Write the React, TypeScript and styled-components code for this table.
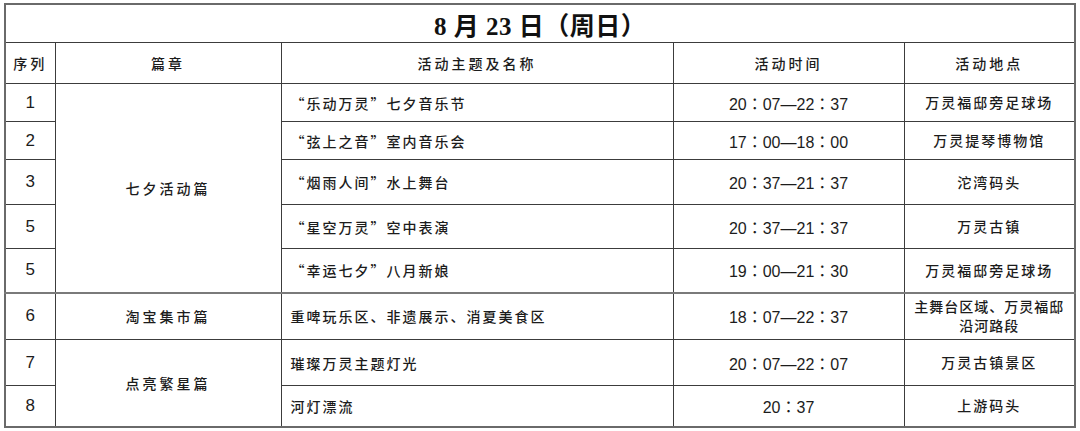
import styled, { createGlobalStyle } from 'styled-components';

const GlobalStyle = createGlobalStyle`
  html, body {
    margin: 0;
    padding: 0;
    background: #fff;
  }
  body {
    font-family: "Liberation Sans", "Noto Sans CJK SC", sans-serif;
    color: #1c1c1c;
  }
`;

type Row = {
  no: string;
  chapter?: { name: string; span: number };
  title: string;
  time: string;
  place: string;
  height: number;
  thick?: boolean;
};

const rows: Row[] = [
  { no: '1', chapter: { name: '七夕活动篇', span: 5 }, title: '“乐动万灵”七夕音乐节', time: '20：07—22：37', place: '万灵福邸旁足球场', height: 38 },
  { no: '2', title: '“弦上之音”室内音乐会', time: '17：00—18：00', place: '万灵提琴博物馆', height: 38 },
  { no: '3', title: '“烟雨人间”水上舞台', time: '20：37—21：37', place: '沱湾码头', height: 45 },
  { no: '5', title: '“星空万灵”空中表演', time: '20：37—21：37', place: '万灵古镇', height: 44 },
  { no: '5', title: '“幸运七夕”八月新娘', time: '19：00—21：30', place: '万灵福邸旁足球场', height: 44 },
  { no: '6', chapter: { name: '淘宝集市篇', span: 1 }, title: '重啤玩乐区、非遗展示、消夏美食区', time: '18：07—22：37', place: '主舞台区域、万灵福邸\n沿河路段', height: 47, thick: true },
  { no: '7', chapter: { name: '点亮繁星篇', span: 2 }, title: '璀璨万灵主题灯光', time: '20：07—22：07', place: '万灵古镇景区', height: 46 },
  { no: '8', title: '河灯漂流', time: '20：37', place: '上游码头', height: 41 },
];

function App() {
  return (
    <>
      <GlobalStyle />
      <Page>
        <Schedule>
          <colgroup>
            <col style={{ width: 50 }} />
            <col style={{ width: 226 }} />
            <col style={{ width: 392 }} />
            <col style={{ width: 231 }} />
            <col style={{ width: 171 }} />
          </colgroup>
          <thead>
            <tr>
              <TitleCell colSpan={5}>8 月 23 日（周日）</TitleCell>
            </tr>
            <HeadRow>
              <HeadCell>序列</HeadCell>
              <HeadCell>篇章</HeadCell>
              <HeadCell>活动主题及名称</HeadCell>
              <HeadCell>活动时间</HeadCell>
              <HeadCell>活动地点</HeadCell>
            </HeadRow>
          </thead>
          <tbody>
            {rows.map((r, i) => (
              <BodyRow key={i} $h={r.height} $thick={r.thick}>
                <NumCell>{r.no}</NumCell>
                {r.chapter && <ChapterCell rowSpan={r.chapter.span}>{r.chapter.name}</ChapterCell>}
                <TitleText>{r.title}</TitleText>
                <TimeCell>{r.time}</TimeCell>
                <PlaceCell $tight={r.place.includes('\n')}>{r.place}</PlaceCell>
              </BodyRow>
            ))}
          </tbody>
        </Schedule>
      </Page>
    </>
  );
}

export default App;

const Page = styled.div`
  padding: 3px 5px 4px 4px;
`;

const Schedule = styled.table`
  width: 1071px;
  border-collapse: collapse;
  table-layout: fixed;
  border: 2px solid #6a6a6a;

  td, th {
    border: 1px solid #3c3c3c;
    padding: 0;
    text-align: center;
    vertical-align: middle;
  }
`;

const TitleCell = styled.th`
  height: 37px;
  font-family: "Liberation Serif", "Noto Sans CJK SC", serif;
  font-size: 25px;
  font-weight: 700;
  color: #111;
  letter-spacing: 0.5px;
`;

const HeadRow = styled.tr`
  height: 41px;
`;

const HeadCell = styled.th`
  font-family: "Noto Sans CJK SC", sans-serif;
  font-size: 14px;
  font-weight: 500;
  letter-spacing: 3px;
  color: #1c1c1c;
`;

const BodyRow = styled.tr<{ $h: number; $thick?: boolean }>`
  height: ${(p) => p.$h}px;
  td {
    ${(p) => (p.$thick ? 'border-top: 2px solid #7a7a7a;' : '')}
  }
`;

const NumCell = styled.td`
  font-family: "Liberation Sans", sans-serif;
  font-size: 17px;
`;

const ChapterCell = styled.td`
  font-family: "Noto Sans CJK SC", sans-serif;
  font-size: 14px;
  font-weight: 500;
  letter-spacing: 3px;
`;

const TitleText = styled.td`
  && {
    text-align: left;
    padding-left: 9px;
  }
  font-family: "Noto Sans CJK SC", sans-serif;
  font-size: 14px;
  font-weight: 500;
  letter-spacing: 2px;
`;

const TimeCell = styled.td`
  font-family: "Liberation Sans", "Noto Sans CJK TC", sans-serif;
  font-size: 16px;
`;

const PlaceCell = styled.td<{ $tight?: boolean }>`
  font-family: "Noto Sans CJK SC", sans-serif;
  font-size: 14px;
  font-weight: 500;
  letter-spacing: ${(p) => (p.$tight ? '1px' : '2px')};
  line-height: 19px;
  white-space: pre-line;
  && {
    padding: 0 2px;
  }
`;
